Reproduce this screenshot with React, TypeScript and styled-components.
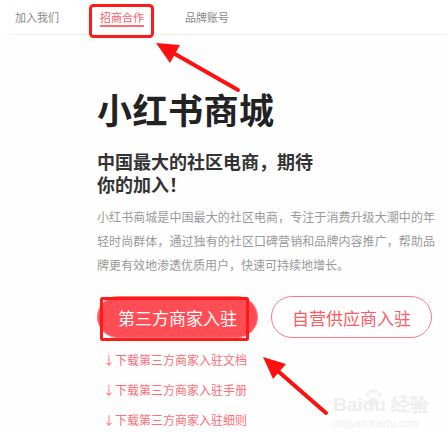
import styled, { createGlobalStyle } from 'styled-components';

const GlobalStyle = createGlobalStyle`
  html, body {
    margin: 0;
    padding: 0;
    background: #ffffff;
  }
  body {
    font-family: "Noto Sans CJK SC", "Noto Sans", sans-serif;
  }
`;

const navItems = [
  { label: '加入我们', active: false },
  { label: '招商合作', active: true },
  { label: '品牌账号', active: false },
];

const links = ['下载第三方商家入驻文档', '下载第三方商家入驻手册', '下载第三方商家入驻细则'];

export default function App() {
  return (
    <Page>
      <GlobalStyle />
      <Header>
        {navItems.map((item) => (
          <NavItem key={item.label} $active={item.active}>
            {item.label}
          </NavItem>
        ))}
      </Header>

      <Main>
        <Title>小红书商城</Title>
        <Subtitle>中国最大的社区电商，期待你的加入！</Subtitle>
        <Intro>
          小红书商城是中国最大的社区电商，专注于消费升级大潮中的年轻时尚群体，通过独有的社区口碑营销和品牌内容推广，帮助品牌更有效地渗透优质用户，快速可持续地增长。
        </Intro>

        <Buttons>
          <JoinButton $filled>第三方商家入驻</JoinButton>
          <JoinButton>自营供应商入驻</JoinButton>
        </Buttons>

        <Links>
          {links.map((l) => (
            <DownloadLink key={l}>↓{l}</DownloadLink>
          ))}
        </Links>
      </Main>

      <Watermark>
        <WatermarkLogo>
          Bai
          <Paw viewBox="0 0 24 22">
            <circle cx="5" cy="7" r="2.6" />
            <circle cx="10" cy="3" r="2.6" />
            <circle cx="15" cy="3" r="2.6" />
            <circle cx="20" cy="7" r="2.6" />
            <path d="M4 17 Q12 4 20 17 Q20 21 12 20 Q4 21 4 17 Z" />
          </Paw>
          du 经验
        </WatermarkLogo>
        <WatermarkUrl>jingyan.baidu.com</WatermarkUrl>
      </Watermark>

      <Annotations viewBox="0 0 447 445">
        <rect x="90.5" y="5.5" width="62" height="31" rx="3" />
        <rect x="101.5" y="298.5" width="146" height="41" rx="1" />
        <line x1="238" y1="90" x2="175" y2="54" />
        <polygon points="156,43 180,45 170,63" />
        <line x1="326" y1="413" x2="279" y2="372" />
        <polygon points="263,357 286,364 273,379" />
      </Annotations>
    </Page>
  );
}

const Page = styled.div`
  position: relative;
  width: 447px;
  height: 445px;
  overflow: hidden;
  background: #ffffff;
`;

const Header = styled.nav`
  display: flex;
  align-items: flex-start;
  gap: 41px;
  height: 35px;
  margin-left: 10px;
  padding: 10px 0 0 5px;
  box-sizing: border-box;
  border-bottom: 1px solid #f1f1f1;
  box-shadow: 0 2px 3px rgba(0, 0, 0, 0.03);
`;

const NavItem = styled.a<{ $active: boolean }>`
  display: block;
  font-size: 11px;
  line-height: 14px;
  padding-bottom: 1px;
  color: ${(p) => (p.$active ? '#ff5a63' : '#888888')};
  border-bottom: 2px solid ${(p) => (p.$active ? '#ff6b73' : 'transparent')};
  cursor: pointer;
`;

const Main = styled.main`
  display: flex;
  flex-direction: column;
  align-items: flex-start;
  padding: 52px 0 0 97px;
  background: #fefefe;
`;

const Title = styled.h1`
  margin: 0;
  font-size: 35px;
  line-height: 44px;
  font-weight: 700;
  color: #222222;
  letter-spacing: 0.5px;
`;

const Subtitle = styled.h2`
  margin: 19px 0 0;
  width: 222px;
  font-size: 18px;
  line-height: 23px;
  font-weight: 700;
  color: #333333;
`;

const Intro = styled.p`
  margin: 9px 0 0;
  width: 338px;
  font-size: 12px;
  line-height: 24px;
  color: #999999;
  text-align: justify;
`;

const Buttons = styled.div`
  display: flex;
  gap: 13px;
  margin-top: 19px;
`;

const JoinButton = styled.button<{ $filled?: boolean }>`
  width: 161px;
  height: 42px;
  border-radius: 21px;
  border: 1px solid #ff7a80;
  background: ${(p) => (p.$filled ? '#ff4d55' : '#ffffff')};
  color: ${(p) => (p.$filled ? '#ffffff' : '#ff5a62')};
  font-family: "Noto Sans CJK SC", sans-serif;
  font-size: 17px;
  cursor: pointer;
  padding: 0;
`;

const Links = styled.div`
  display: flex;
  flex-direction: column;
  gap: 13px;
  margin: 13px 0 0 6px;
`;

const DownloadLink = styled.a`
  font-size: 12px;
  line-height: 17px;
  color: #ff6f77;
  cursor: pointer;
`;

const Watermark = styled.div`
  position: absolute;
  left: 333px;
  top: 389px;
  display: flex;
  flex-direction: column;
  color: #eeeeee;
  font-family: "Liberation Sans", sans-serif;
`;

const WatermarkLogo = styled.div`
  display: flex;
  align-items: flex-end;
  font-size: 19px;
  font-weight: 700;
  line-height: 20px;
`;

const Paw = styled.svg`
  width: 20px;
  height: 18px;
  margin: 0 -20px 8px 0;
  fill: #f2f2f2;
`;

const WatermarkUrl = styled.div`
  font-size: 10px;
  margin-top: 3px;
  letter-spacing: 0.3px;
`;

const Annotations = styled.svg`
  position: absolute;
  inset: 0;
  width: 447px;
  height: 445px;
  pointer-events: none;

  rect {
    fill: none;
    stroke: #ff1a1a;
    stroke-width: 3;
  }
  line {
    stroke: #ff1010;
    stroke-width: 4;
    stroke-linecap: round;
  }
  polygon {
    fill: #ff1010;
  }
`;
